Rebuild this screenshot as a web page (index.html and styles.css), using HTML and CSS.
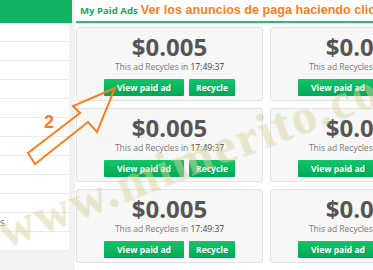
FILE: index.html
```html
<!DOCTYPE html>
<html lang="es">
<head>
  <meta charset="UTF-8" />
  <title>My Paid Ads</title>
  <meta name="viewport" content="width=device-width, initial-scale=1.0">
  <link rel="stylesheet" href="styles.css">
</head>
<body>

<div class="page">
  <aside class="side">
    <div class="side-head"></div>
    <ul class="side-menu">
      <li></li>
      <li></li>
      <li></li>
      <li></li>
      <li></li>
      <li></li>
      <li></li>
      <li></li>
      <li></li>
      <li></li>
      <li>Withdrawals</li>
      <li></li>
    </ul>
  </aside>

  <main class="ads">
    <div class="ads-head">
      <span class="ads-title">My Paid Ads</span>
      <span class="ads-hint">Ver los anuncios de paga haciendo clic en el botón</span>
    </div>

    <div class="ad-grid">
      <div class="ad-card">
        <div class="ad-amount">$0.005</div>
        <div class="ad-timer">This ad Recycles in <b>17:49:37</b></div>
        <div class="ad-actions">
          <button class="btn btn-view">View paid ad</button>
          <button class="btn btn-recycle">Recycle</button>
        </div>
      </div>
      <div class="ad-card">
        <div class="ad-amount">$0.005</div>
        <div class="ad-timer">This ad Recycles in <b>17:49:37</b></div>
        <div class="ad-actions">
          <button class="btn btn-view">View paid ad</button>
          <button class="btn btn-recycle">Recycle</button>
        </div>
      </div>
      <div class="ad-card">
        <div class="ad-amount">$0.005</div>
        <div class="ad-timer">This ad Recycles in <b>17:49:37</b></div>
        <div class="ad-actions">
          <button class="btn btn-view">View paid ad</button>
          <button class="btn btn-recycle">Recycle</button>
        </div>
      </div>
      <div class="ad-card">
        <div class="ad-amount">$0.005</div>
        <div class="ad-timer">This ad Recycles in <b>17:49:37</b></div>
        <div class="ad-actions">
          <button class="btn btn-view">View paid ad</button>
          <button class="btn btn-recycle">Recycle</button>
        </div>
      </div>
      <div class="ad-card">
        <div class="ad-amount">$0.005</div>
        <div class="ad-timer">This ad Recycles in <b>17:49:37</b></div>
        <div class="ad-actions">
          <button class="btn btn-view">View paid ad</button>
          <button class="btn btn-recycle">Recycle</button>
        </div>
      </div>
      <div class="ad-card">
        <div class="ad-amount">$0.005</div>
        <div class="ad-timer">This ad Recycles in <b>17:49:37</b></div>
        <div class="ad-actions">
          <button class="btn btn-view">View paid ad</button>
          <button class="btn btn-recycle">Recycle</button>
        </div>
      </div>
      <div class="ad-card"></div>
      <div class="ad-card"></div>
    </div>
  </main>
</div>

<!-- tutorial overlay -->
<svg class="hint-arrow" width="130" height="180" viewBox="0 0 130 180">
  <polygon points="115,88 73,106 80,113 28,153 35,164 88,122 97,132"
           fill="none" stroke="#ff7d1e" stroke-width="2" stroke-linejoin="miter" />
  <text x="44" y="128" class="hint-num">2</text>
</svg>

<div class="watermark">www.mimerito.com</div>

</body>
</html>
```

FILE: styles.css
```css
* {
  box-sizing: border-box;
}

body {
  margin: 0;
  font-family: 'Open Sans', 'DejaVu Sans', sans-serif;
  background: #f2f2f2;
  overflow: hidden;
  position: relative;
  height: 270px;
}

.page {
  display: flex;
  align-items: flex-start;
  gap: 3px;
}

/* left menu, scrolled off to the left */
.side {
  width: 72px;
  flex-shrink: 0;
  overflow: hidden;
}

.side-head {
  height: 23px;
  background: #12b463;
}

.side-menu {
  list-style: none;
  margin: 0 3px 0 -61px;
  padding: 0;
  background: #fff;
  width: 130px;
}

.side-menu li {
  height: 19px;
  line-height: 18px;
  border-bottom: 1px solid #ebebeb;
  padding-left: 8px;
  font-size: 10px;
  color: #666;
}

.ads {
  flex: 1;
  background: #fff;
  padding-left: 1px;
  min-height: 270px;
}

.ads-head {
  height: 23px;
  border-bottom: 2px solid #22c46c;
  padding-left: 4px;
  display: flex;
  align-items: baseline;
  gap: 3px;
  white-space: nowrap;
  overflow: hidden;
  padding-top: 3px;
}

.ads-title {
  font-size: 9.6px;
  font-weight: 700;
  color: #1aa85c;
}

.ads-hint {
  font-family: 'Liberation Sans', Arial, sans-serif;
  font-size: 12.6px;
  font-weight: 700;
  color: #ff7d1e;
}

.ad-grid {
  margin-top: 4px;
  display: grid;
  grid-template-columns: 187px 187px;
  grid-auto-rows: 74px;
  gap: 7px;
}

.ad-card {
  background: #f7f7f7;
  border: 1px solid #e2e2e2;
  border-radius: 3px;
  padding-top: 7px;
  text-align: center;
}

.ad-amount {
  font-size: 24px;
  line-height: 24px;
  font-weight: 700;
  color: #555;
}

.ad-timer {
  font-size: 8.5px;
  line-height: 12px;
  color: #777;
  margin-top: 2px;
}

.ad-timer b {
  font-weight: 400;
  color: #444;
}

.ad-actions {
  display: flex;
  justify-content: center;
  gap: 5px;
  margin-top: 6px;
}

.btn {
  height: 17px;
  border: none;
  border-radius: 1px;
  padding: 0;
  background: linear-gradient(#14c468, #00a955);
  color: #fff;
  font-family: 'Open Sans', sans-serif;
  font-size: 8.5px;
  font-weight: 700;
}

.btn-view {
  width: 80px;
}

.btn-recycle {
  width: 46px;
}

.hint-arrow {
  position: absolute;
  left: 0;
  top: 0;
}

.hint-num {
  font-family: 'Liberation Sans', Arial, sans-serif;
  font-size: 18px;
  font-weight: 700;
  fill: #ff7d1e;
}

.watermark {
  position: absolute;
  left: -12px;
  top: 205px;
  transform: rotate(-21deg);
  transform-origin: left top;
  font-family: 'Liberation Serif', serif;
  font-size: 50px;
  font-weight: 700;
  letter-spacing: 2px;
  color: rgba(240, 233, 180, 0.4);
  text-shadow: 1px 1px 1px rgba(130, 115, 60, 0.15);
  white-space: nowrap;
  pointer-events: none;
}
```
